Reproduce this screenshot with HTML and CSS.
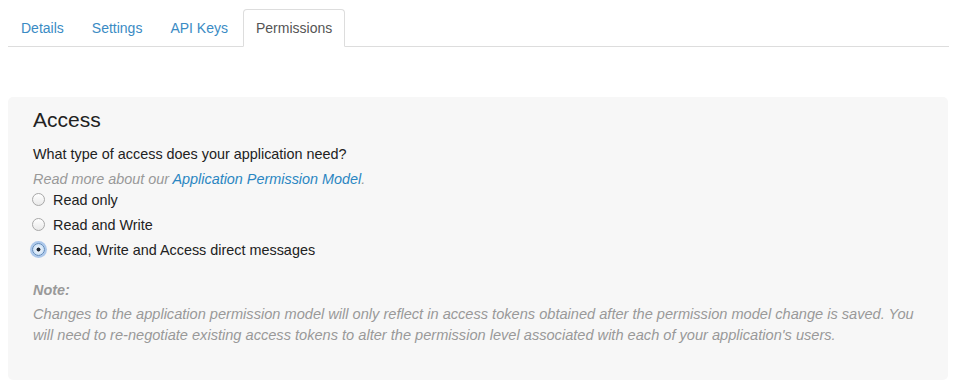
FILE: index.html
```html
<!DOCTYPE html>
<html>
<head>
<meta charset="utf-8">
<link rel="stylesheet" href="styles.css">
</head>
<body>
<ul class="tabs">
  <li class="tab"><a href="#">Details</a></li>
  <li class="tab"><a href="#">Settings</a></li>
  <li class="tab"><a href="#">API Keys</a></li>
  <li class="tab active"><a href="#">Permissions</a></li>
</ul>
<div class="well">
  <h3 class="title">Access</h3>
  <p class="question">What type of access does your application need?</p>
  <p class="more">Read more about our <a href="#">Application Permission Model</a>.</p>
  <div class="options">
    <label class="option"><input type="radio" name="access"> Read only</label>
    <label class="option"><input type="radio" name="access"> Read and Write</label>
    <label class="option"><input type="radio" name="access" checked> Read, Write and Access direct messages</label>
  </div>
  <p class="note-title">Note:</p>
  <p class="note">Changes to the application permission model will only reflect in access tokens obtained after the permission model change is saved. You will need to re-negotiate existing access tokens to alter the permission level associated with each of your application's users.</p>
</div>
</body>
</html>
```
FILE: styles.css
```css
* { box-sizing: border-box; }
body {
  margin: 0;
  padding: 9px 8px 0 8px;
  font-family: "Liberation Sans", Arial, Helvetica, sans-serif;
  font-size: 14.4px;
  color: #333;
  background: #fff;
}
.tabs {
  list-style: none;
  margin: 0;
  padding: 0;
  display: flex;
  border-bottom: 1px solid #ddd;
  height: 38px;
}
.tab {
  margin-right: 2px;
}
.tab a {
  display: block;
  padding: 8px 12px;
  line-height: 20px;
  font-size: 14px;
  color: #3a8bc4;
  text-decoration: none;
  border: 1px solid transparent;
  border-radius: 4px 4px 0 0;
  height: 38px;
}
.tab.active a {
  color: #555;
  background: #fff;
  border-color: #ddd #ddd transparent #ddd;
}
.well {
  margin-top: 50px;
  background: #f7f7f7;
  border-radius: 5px;
  width: 940px;
  height: 283px;
  padding: 11px 25px 0 25px;
}
.title {
  margin: 0;
  font-size: 21px;
  font-weight: normal;
  line-height: 24px;
  color: #222;
}
.question {
  margin: 12px 0 0;
  line-height: 20px;
  color: #222;
}
.more {
  margin: 5px 0 0;
  line-height: 20px;
  color: #999;
  font-style: italic;
}
.more a {
  color: #2a86c2;
  text-decoration: none;
}
.options {
  margin-top: 1px;
  display: flex;
  flex-direction: column;
  gap: 5px;
}
.option {
  display: flex;
  align-items: center;
  line-height: 20px;
  color: #222;
  gap: 8px;
}
.option input {
  -webkit-appearance: none;
  appearance: none;
  margin: 0 0 0 -1px;
  width: 13px;
  height: 13px;
  border-radius: 50%;
  border: 1px solid #a8a8a8;
  background: linear-gradient(#fff, #e9e9e9);
  position: relative;
  top: -1px;
}
.option input:checked {
  border-color: #5a86b8;
  background: radial-gradient(circle, #1d2530 0 1.7px, #e8f1fb 2.3px, #b5d2ef 100%);
  box-shadow: 0 0 0 2px rgba(110, 160, 225, 0.55);
}
.note-title {
  margin: 20px 0 0;
  line-height: 20px;
  color: #999;
  font-style: italic;
  font-weight: bold;
}
.note {
  margin: 4px 0 0;
  font-size: 14.6px;
  line-height: 21px;
  color: #999;
  font-style: italic;
}
```
